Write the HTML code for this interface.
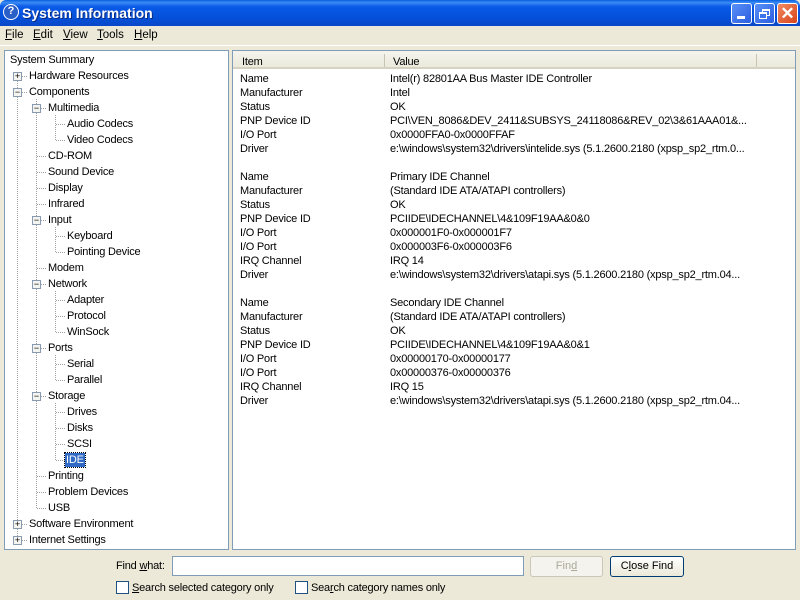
<!DOCTYPE html>
<html><head><style>
*{margin:0;padding:0;box-sizing:border-box}
body{width:800px;height:600px;overflow:hidden;background:#ece9d8;font-family:"Liberation Sans",Tahoma,sans-serif;font-size:11px;color:#000;position:relative}
.a{position:absolute;white-space:nowrap;line-height:14px;letter-spacing:-0.2px}
#title{position:absolute;left:0;top:0;width:800px;height:26px;background:linear-gradient(#0a5fe0 0%,#3b8cf5 10%,#0a5ae8 25%,#0450d8 70%,#0a48c8 100%);border-radius:6px 6px 0 0}
#title .t{position:absolute;left:22px;top:5px;color:#fff;font-weight:bold;font-size:14px;text-shadow:1px 1px #0a2a80}
.ic{position:absolute;left:3px;top:4px;width:16px;height:16px;border-radius:50%;background:#2a5fc8;border:1.5px solid #fff;color:#fff;font-weight:bold;font-size:11px;text-align:center;line-height:13px}
.wb{position:absolute;top:3px;width:21px;height:21px;border:1px solid #fff;border-radius:3px;background:linear-gradient(135deg,#5a90f8,#2a5ee0)}
.menu{position:absolute;top:29px;font-size:11.5px}
.pane{position:absolute;background:#fff;border:1px solid #7f9db9}
.dv{position:absolute;border-left:1px dotted #a0a0a0;width:0}
.dh{position:absolute;border-top:1px dotted #a0a0a0;height:0}
.bx{position:absolute;width:9px;height:9px;border:1px solid #8a9ab0;background:#f4f4f0;font-size:9px;line-height:7px;text-align:center;color:#000}
.sel{background:#316ac5;color:#fff;outline:1px dotted #000;padding:0 1px}
.btn{position:absolute;height:21px;border:1px solid #003c74;border-radius:3px;background:linear-gradient(#fff,#ece9d8);text-align:center;line-height:19px}
.cb{position:absolute;width:13px;height:13px;border:1px solid #1c5180;background:#fff}
#tree{position:absolute;left:0;top:1px;width:230px;height:500px}
</style></head><body>
<div id="title"><div class="ic">?</div><div class="t">System Information</div>
<div class="wb" style="left:731px;"><div style="position:absolute;left:5px;top:12px;width:8px;height:3px;background:#fff"></div></div>
<div class="wb" style="left:754px;"><div style="position:absolute;left:7px;top:5px;width:8px;height:7px;border:1px solid #fff;border-top-width:2px"></div><div style="position:absolute;left:4px;top:8px;width:8px;height:7px;border:1px solid #fff;border-top-width:2px;background:#3d72ea"></div></div>
<div class="wb" style="left:777px;background:linear-gradient(135deg,#f08a60,#d8431c);font-size:17px;color:#fff;text-align:center;line-height:19px;font-weight:bold">✕</div>
</div>
<div class="menu" style="left:5px"><u>F</u>ile</div>
<div class="menu" style="left:33px"><u>E</u>dit</div>
<div class="menu" style="left:63px"><u>V</u>iew</div>
<div class="menu" style="left:97px"><u>T</u>ools</div>
<div class="menu" style="left:134px"><u>H</u>elp</div>
<div style="position:absolute;left:0;top:45px;width:800px;height:1px;background:#fff"></div>

<div class="pane" style="left:4px;top:50px;width:225px;height:500px"></div>
<div class="pane" style="left:232px;top:50px;width:564px;height:500px"></div>
<div style="position:absolute;left:233px;top:51px;width:562px;height:18px;background:linear-gradient(#f5f4ee,#ebeadb);border-bottom:2px solid #d6d2c2"></div>
<div style="position:absolute;left:384px;top:54px;width:1px;height:13px;background:#c7c5b2"></div>
<div style="position:absolute;left:756px;top:54px;width:1px;height:13px;background:#c7c5b2"></div>
<div class="a" style="left:242px;top:55px">Item</div>
<div class="a" style="left:393px;top:55px">Value</div>

<div id="tree">
<div class="dv" style="left:17px;top:75px;height:464px"></div>
<div class="dv" style="left:36px;top:98px;height:409px"></div>
<div class="dv" style="left:55px;top:114px;height:25px"></div>
<div class="dv" style="left:55px;top:226px;height:25px"></div>
<div class="dv" style="left:55px;top:290px;height:41px"></div>
<div class="dv" style="left:55px;top:354px;height:25px"></div>
<div class="dv" style="left:55px;top:402px;height:57px"></div>

<div class="a" style="left:10px;top:52px">System Summary</div>
<div class="bx" style="left:13px;top:71px">+</div><div class="dh" style="left:22px;top:75px;width:5px"></div><div class="a" style="left:29px;top:68px">Hardware Resources</div>
<div class="bx" style="left:13px;top:87px">−</div><div class="dh" style="left:22px;top:91px;width:5px"></div><div class="a" style="left:29px;top:84px">Components</div>
<div class="bx" style="left:32px;top:103px">−</div><div class="dh" style="left:41px;top:107px;width:5px"></div><div class="a" style="left:48px;top:100px">Multimedia</div>
<div class="dh" style="left:56px;top:123px;width:9px"></div><div class="a" style="left:67px;top:116px">Audio Codecs</div>
<div class="dh" style="left:56px;top:139px;width:9px"></div><div class="a" style="left:67px;top:132px">Video Codecs</div>
<div class="dh" style="left:37px;top:155px;width:9px"></div><div class="a" style="left:48px;top:148px">CD-ROM</div>
<div class="dh" style="left:37px;top:171px;width:9px"></div><div class="a" style="left:48px;top:164px">Sound Device</div>
<div class="dh" style="left:37px;top:187px;width:9px"></div><div class="a" style="left:48px;top:180px">Display</div>
<div class="dh" style="left:37px;top:203px;width:9px"></div><div class="a" style="left:48px;top:196px">Infrared</div>
<div class="bx" style="left:32px;top:215px">−</div><div class="dh" style="left:41px;top:219px;width:5px"></div><div class="a" style="left:48px;top:212px">Input</div>
<div class="dh" style="left:56px;top:235px;width:9px"></div><div class="a" style="left:67px;top:228px">Keyboard</div>
<div class="dh" style="left:56px;top:251px;width:9px"></div><div class="a" style="left:67px;top:244px">Pointing Device</div>
<div class="dh" style="left:37px;top:267px;width:9px"></div><div class="a" style="left:48px;top:260px">Modem</div>
<div class="bx" style="left:32px;top:279px">−</div><div class="dh" style="left:41px;top:283px;width:5px"></div><div class="a" style="left:48px;top:276px">Network</div>
<div class="dh" style="left:56px;top:299px;width:9px"></div><div class="a" style="left:67px;top:292px">Adapter</div>
<div class="dh" style="left:56px;top:315px;width:9px"></div><div class="a" style="left:67px;top:308px">Protocol</div>
<div class="dh" style="left:56px;top:331px;width:9px"></div><div class="a" style="left:67px;top:324px">WinSock</div>
<div class="bx" style="left:32px;top:343px">−</div><div class="dh" style="left:41px;top:347px;width:5px"></div><div class="a" style="left:48px;top:340px">Ports</div>
<div class="dh" style="left:56px;top:363px;width:9px"></div><div class="a" style="left:67px;top:356px">Serial</div>
<div class="dh" style="left:56px;top:379px;width:9px"></div><div class="a" style="left:67px;top:372px">Parallel</div>
<div class="bx" style="left:32px;top:391px">−</div><div class="dh" style="left:41px;top:395px;width:5px"></div><div class="a" style="left:48px;top:388px">Storage</div>
<div class="dh" style="left:56px;top:411px;width:9px"></div><div class="a" style="left:67px;top:404px">Drives</div>
<div class="dh" style="left:56px;top:427px;width:9px"></div><div class="a" style="left:67px;top:420px">Disks</div>
<div class="dh" style="left:56px;top:443px;width:9px"></div><div class="a" style="left:67px;top:436px">SCSI</div>
<div class="dh" style="left:56px;top:459px;width:9px"></div><div class="a sel" style="left:65px;top:452px">IDE</div>
<div class="dh" style="left:37px;top:475px;width:9px"></div><div class="a" style="left:48px;top:468px">Printing</div>
<div class="dh" style="left:37px;top:491px;width:9px"></div><div class="a" style="left:48px;top:484px">Problem Devices</div>
<div class="dh" style="left:37px;top:507px;width:9px"></div><div class="a" style="left:48px;top:500px">USB</div>
<div class="bx" style="left:13px;top:519px">+</div><div class="dh" style="left:22px;top:523px;width:5px"></div><div class="a" style="left:29px;top:516px">Software Environment</div>
<div class="bx" style="left:13px;top:535px">+</div><div class="dh" style="left:22px;top:539px;width:5px"></div><div class="a" style="left:29px;top:532px">Internet Settings</div>
</div>

<div class="a" style="left:240px;top:72px">Name<br>Manufacturer<br>Status<br>PNP Device ID<br>I/O Port<br>Driver<br><br>Name<br>Manufacturer<br>Status<br>PNP Device ID<br>I/O Port<br>I/O Port<br>IRQ Channel<br>Driver<br><br>Name<br>Manufacturer<br>Status<br>PNP Device ID<br>I/O Port<br>I/O Port<br>IRQ Channel<br>Driver</div>
<div class="a" style="left:390px;top:72px">Intel(r) 82801AA Bus Master IDE Controller<br>Intel<br>OK<br>PCI\VEN_8086&amp;DEV_2411&amp;SUBSYS_24118086&amp;REV_02\3&amp;61AAA01&amp;...<br>0x0000FFA0-0x0000FFAF<br>e:\windows\system32\drivers\intelide.sys (5.1.2600.2180 (xpsp_sp2_rtm.0...<br><br>Primary IDE Channel<br>(Standard IDE ATA/ATAPI controllers)<br>OK<br>PCIIDE\IDECHANNEL\4&amp;109F19AA&amp;0&amp;0<br>0x000001F0-0x000001F7<br>0x000003F6-0x000003F6<br>IRQ 14<br>e:\windows\system32\drivers\atapi.sys (5.1.2600.2180 (xpsp_sp2_rtm.04...<br><br>Secondary IDE Channel<br>(Standard IDE ATA/ATAPI controllers)<br>OK<br>PCIIDE\IDECHANNEL\4&amp;109F19AA&amp;0&amp;1<br>0x00000170-0x00000177<br>0x00000376-0x00000376<br>IRQ 15<br>e:\windows\system32\drivers\atapi.sys (5.1.2600.2180 (xpsp_sp2_rtm.04...</div>

<div class="a" style="left:116px;top:559px">Find <u>w</u>hat:</div>
<div style="position:absolute;left:172px;top:556px;width:352px;height:20px;background:#fff;border:1px solid #7f9db9"></div>
<div class="btn" style="left:530px;top:556px;width:73px;border-color:#c9c7ba;background:#f4f3ee;color:#aca899">Fin<u>d</u></div>
<div class="btn" style="left:610px;top:556px;width:74px">C<span style="text-decoration:underline">l</span>ose Find</div>
<div class="cb" style="left:116px;top:581px"></div><div class="a" style="left:132px;top:581px"><u>S</u>earch selected category only</div>
<div class="cb" style="left:295px;top:581px"></div><div class="a" style="left:311px;top:581px">Sea<u>r</u>ch category names only</div>
</body></html>
